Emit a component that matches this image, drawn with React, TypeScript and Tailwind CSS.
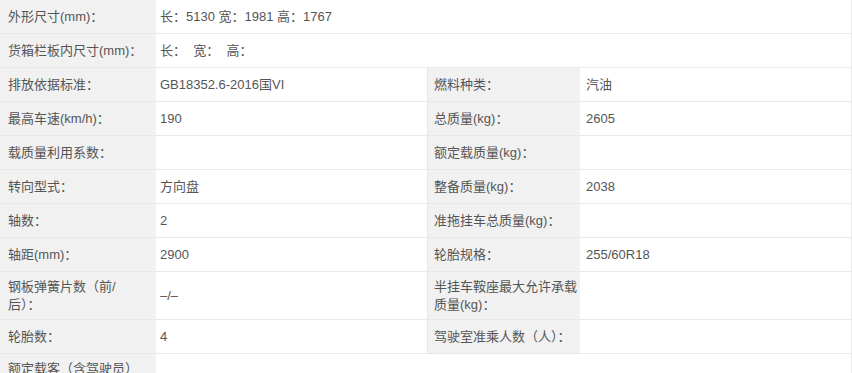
import React from "react";

type Row = {
  l1: React.ReactNode;
  v1: React.ReactNode;
  l2?: React.ReactNode;
  v2?: React.ReactNode;
  span?: boolean;
  tall?: boolean;
};

const rows: Row[] = [
  { l1: "外形尺寸(mm)：", v1: "长：5130 宽：1981 高：1767", span: true },
  { l1: "货箱栏板内尺寸(mm)：", v1: "长：  宽：  高：", span: true },
  { l1: "排放依据标准：", v1: "GB18352.6-2016国VI", l2: "燃料种类：", v2: "汽油" },
  { l1: "最高车速(km/h)：", v1: "190", l2: "总质量(kg)：", v2: "2605" },
  { l1: "载质量利用系数：", v1: "", l2: "额定载质量(kg)：", v2: "" },
  { l1: "转向型式：", v1: "方向盘", l2: "整备质量(kg)：", v2: "2038" },
  { l1: "轴数：", v1: "2", l2: "准拖挂车总质量(kg)：", v2: "" },
  { l1: "轴距(mm)：", v1: "2900", l2: "轮胎规格：", v2: "255/60R18" },
  {
    l1: (
      <>
        钢板弹簧片数（前/
        <br />
        后）：
      </>
    ),
    v1: "–/–",
    l2: (
      <>
        半挂车鞍座最大允许承载
        <br />
        质量(kg)：
      </>
    ),
    v2: "",
    tall: true,
  },
  { l1: "轮胎数：", v1: "4", l2: "驾驶室准乘人数（人）：", v2: "" },
  {
    l1: (
      <>
        额定载客（含驾驶员）
        <br />
        (人)：
      </>
    ),
    v1: "–",
    span: true,
    tall: true,
  },
];

export default function App() {
  return (
    <div
      className="w-[852px] h-[373px] overflow-hidden bg-white text-[13px] text-[#555] leading-[18px]"
      style={{ fontFamily: '"Liberation Sans", "Noto Sans CJK SC", sans-serif' }}
    >
      {rows.map((r, i) => (
        <div
          key={i}
          className={`grid grid-cols-[156px_271px_153px_272px] border-b border-[#e9e9e9] ${
            r.tall ? "h-[48px]" : "h-[34px]"
          }`}
        >
          <div className="bg-[#f1f1f1] pl-2 flex items-center whitespace-nowrap">
            <span>{r.l1}</span>
          </div>
          {r.span ? (
            <div className="col-span-3 pl-1 flex items-center whitespace-pre border-r border-[#e9e9e9]">
              {r.v1}
            </div>
          ) : (
            <>
              <div className="pl-1 flex items-center">{r.v1}</div>
              <div className="bg-[#f1f1f1] pl-[6px] flex items-center whitespace-nowrap border-l border-[#e6e6e6]">
                <span>{r.l2}</span>
              </div>
              <div className="pl-[6px] flex items-center border-r border-[#e9e9e9]">{r.v2}</div>
            </>
          )}
        </div>
      ))}
    </div>
  );
}
